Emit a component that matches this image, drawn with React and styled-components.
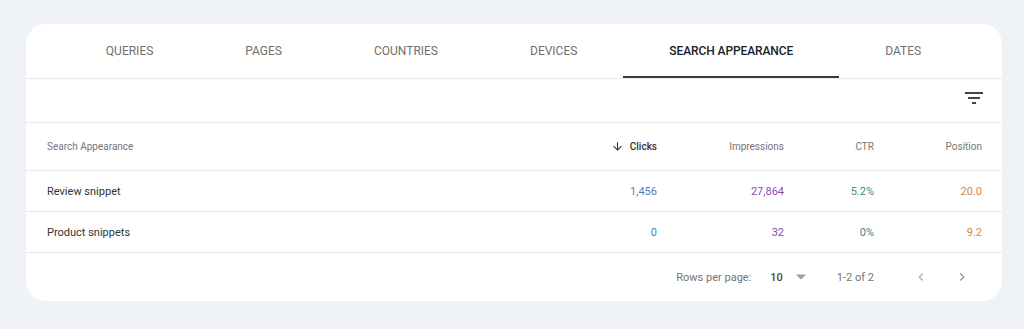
import React from "react";
import styled, { createGlobalStyle } from "styled-components";

const Global = createGlobalStyle`
  html, body { margin: 0; padding: 0; background: #eff2f7; }
  body { font-family: Roboto, "Liberation Sans", Arial, sans-serif; }
`;

const Page = styled.div`
  padding: 24px 22px 28px 26px;
`;

const Card = styled.div`
  background: #fff;
  border-radius: 20px;
  overflow: hidden;
`;

const Tabs = styled.div`
  display: flex;
  justify-content: center;
  height: 54px;
  border-bottom: 1px solid #e8eaed;
  padding-right: 1px;
`;

const Tab = styled.div`
  display: flex;
  align-items: center;
  padding: 0 46px;
  font-size: 12px;
  font-weight: ${(p) => (p.$active ? 500 : 400)};
  letter-spacing: ${(p) => (p.$active ? "-0.1px" : "0")};
  color: ${(p) => (p.$active ? "#202124" : "#707070")};
  box-shadow: ${(p) => (p.$active ? "inset 0 -2px 0 #3c3c3c" : "none")};
`;

const Toolbar = styled.div`
  height: 44px;
  box-sizing: border-box;
  display: flex;
  align-items: center;
  justify-content: flex-end;
  padding: 0 16px 6px 0;
  border-bottom: 1px solid #e8eaed;
`;

const Row = styled.div`
  display: grid;
  grid-template-columns: 1fr 100px 127px 90px 108px;
  align-items: center;
  padding: 0 20px 0 21px;
  height: ${(p) => p.$h || 40}px;
  border-bottom: 1px solid #e8eaed;
`;

const HeadCell = styled.div`
  font-size: 10px;
  color: ${(p) => (p.$strong ? "#333" : "#757575")};
  font-weight: ${(p) => (p.$strong ? 500 : 400)};
  display: flex;
  align-items: center;
  justify-content: ${(p) => (p.$left ? "flex-start" : "flex-end")};
  gap: 6px;
`;

const Cell = styled.div`
  font-size: 11px;
  color: ${(p) => p.$color || "#333"};
  text-align: ${(p) => (p.$left ? "left" : "right")};
`;

const Footer = styled.div`
  height: 48px;
  display: flex;
  align-items: center;
  justify-content: flex-end;
  padding-right: 28px;
  font-size: 11px;
  color: #757575;
`;

const RowsLabel = styled.span`
  margin-right: 19px;
`;

const Select = styled.span`
  display: flex;
  align-items: center;
  color: #444;
  font-weight: 500;
  gap: 13px;
  margin-right: 31px;
`;

const Range = styled.span`
  margin-right: 35px;
`;

const NavBtn = styled.span`
  display: flex;
  align-items: center;
  justify-content: center;
  width: 24px;
  margin-left: ${(p) => p.$ml || 0}px;
`;

const FilterIcon = () => (
  <svg width="24" height="24" viewBox="0 0 24 24" fill="#444">
    <path d="M10 18h4v-2h-4v2zM3 6v2h18V6H3zm3 7h12v-2H6v2z" />
  </svg>
);

const tabs = ["QUERIES", "PAGES", "COUNTRIES", "DEVICES", "SEARCH APPEARANCE", "DATES"];
const rows = [
  { name: "Review snippet", clicks: "1,456", imp: "27,864", ctr: "5.2%", pos: "20.0" },
  { name: "Product snippets", clicks: "0", imp: "32", ctr: "0%", pos: "9.2" },
];

export default function App() {
  return (
    <Page>
      <Global />
      <Card>
        <Tabs>
          {tabs.map((t) => (
            <Tab key={t} $active={t === "SEARCH APPEARANCE"}>{t}</Tab>
          ))}
        </Tabs>
        <Toolbar>
          <FilterIcon />
        </Toolbar>
        <Row $h={47}>
          <HeadCell $left>Search Appearance</HeadCell>
          <HeadCell $strong>
            <svg width="13" height="13" viewBox="0 0 24 24" fill="#333">
              <path d="M20 12l-1.41-1.41L13 16.17V4h-2v12.17l-5.58-5.59L4 12l8 8 8-8z" />
            </svg>
            Clicks
          </HeadCell>
          <HeadCell>Impressions</HeadCell>
          <HeadCell>CTR</HeadCell>
          <HeadCell>Position</HeadCell>
        </Row>
        {rows.map((r) => (
          <Row key={r.name}>
            <Cell $left>{r.name}</Cell>
            <Cell $color="#4e80c4">{r.clicks}</Cell>
            <Cell $color="#8a4aab">{r.imp}</Cell>
            <Cell $color="#3a8f7a">{r.ctr}</Cell>
            <Cell $color="#d4893f">{r.pos}</Cell>
          </Row>
        ))}
        <Footer>
          <RowsLabel>Rows per page:</RowsLabel>
          <Select>
            10
            <svg width="10" height="6" viewBox="0 0 10 5" fill="#9e9e9e">
              <path d="M0 0l5 5 5-5z" />
            </svg>
          </Select>
          <Range>1-2 of 2</Range>
          <NavBtn>
            <svg width="16" height="16" viewBox="0 0 24 24" fill="#b0b0b0">
              <path d="M15.41 7.41L14 6l-6 6 6 6 1.41-1.41L10.83 12z" />
            </svg>
          </NavBtn>
          <NavBtn $ml={17}>
            <svg width="16" height="16" viewBox="0 0 24 24" fill="#9a9a9a">
              <path d="M10 6L8.59 7.41 13.17 12l-4.58 4.59L10 18l6-6z" />
            </svg>
          </NavBtn>
        </Footer>
      </Card>
    </Page>
  );
}
